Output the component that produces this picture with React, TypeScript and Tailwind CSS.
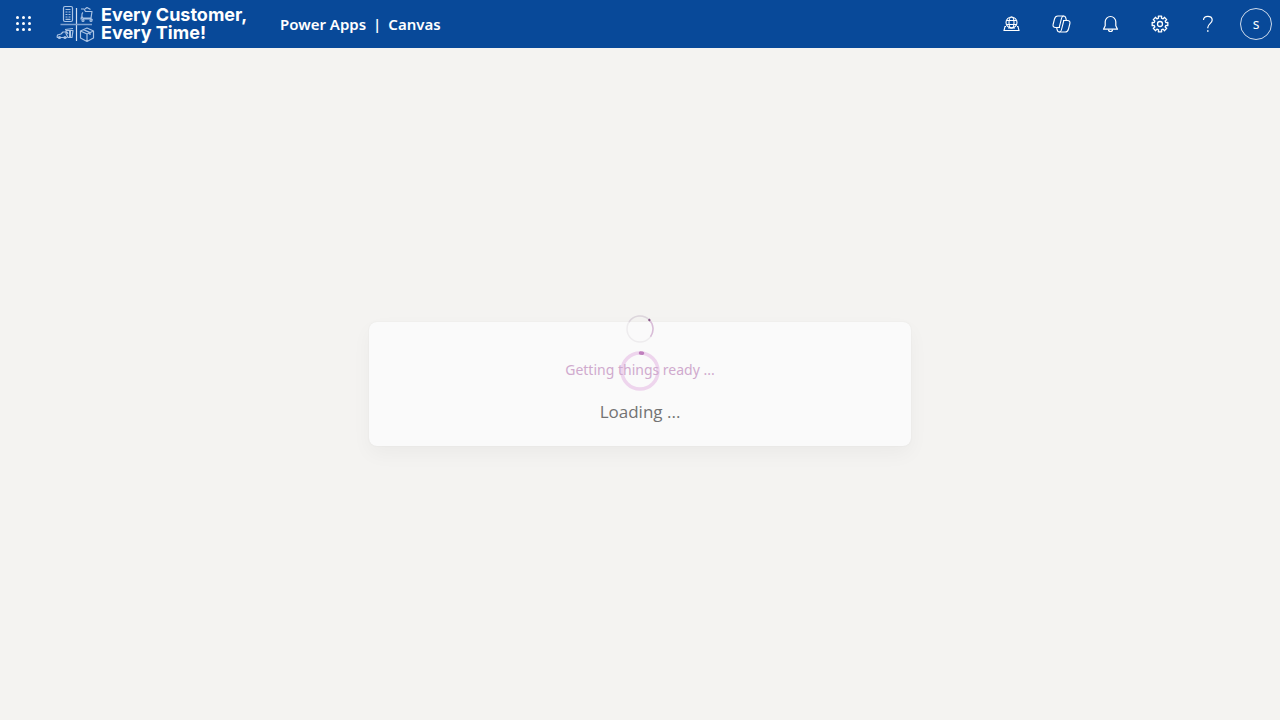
import React from 'react';

const teeth = Array.from({ length: 8 }, (_, i) => i * 45);
const gearPoints = teeth
  .flatMap((deg) =>
    [
      [deg - 12, 8],
      [deg + 12, 8],
      [deg + 14, 6],
      [deg + 31, 6],
    ].map(([a, r]) => {
      const t = (a * Math.PI) / 180;
      return `${(9 + r * Math.sin(t)).toFixed(2)},${(9 - r * Math.cos(t)).toFixed(2)}`;
    }),
  )
  .join(' ');

function WaffleIcon() {
  return (
    <svg width="16" height="16" viewBox="0 0 16 16" fill="white" aria-hidden="true">
      {[1.5, 7.5, 13.5].map((y) =>
        [1.5, 7.5, 13.5].map((x) => <circle key={`${x}-${y}`} cx={x} cy={y} r="1.5" />),
      )}
    </svg>
  );
}

function LogoMark() {
  return (
    <svg
      width="40"
      height="38"
      viewBox="0 0 40 38"
      fill="none"
      stroke="#a9c3e4"
      strokeWidth="1.200"
      strokeLinejoin="round"
      aria-hidden="true"
    >
      <path d="M20.500 3v33" stroke="#d3e0f0" />
      <path d="M4.500 19.500H36" stroke="#7fa2d0" strokeWidth="1.500" />
      <rect x="7.500" y="1.500" width="9" height="15" rx="1.500" />
      <path d="M9.500 4.500h5M9.500 7h2M12.500 7h2M9.500 9.500h2M12.500 9.500h2M9.500 12h2M12.500 12h2M9.500 14.300h5" />
      <path d="M25 4h3l1.500 2.500H36L35 13h-8M29 4l2-1.500 3.500 2M27 7.500c-1.500 1-1.500 4.500 0 5.500M25.500 11.500l-.5 2.500h10.500l1 1" />
      <circle cx="27" cy="15.500" r="1" />
      <circle cx="35" cy="15.500" r="1" />
      <path d="M1 32.500l.5-2.500 3.500-1 2-2h4l1 2M1 32.500h10M9 24.500l8-1M10 25.500h7l-1 7h-4l-2-4z" />
      <path d="M14 25.500v7" strokeWidth="2" />
      <circle cx="3.500" cy="32.500" r="1" />
      <circle cx="9" cy="32.500" r="1" />
      <path d="M24.500 26l6.500-3 6.500 3v7L31 36.500 24.500 33zM24.500 26l6.500 3 6.500-3M31 29v7.500M27.500 24.600l6.500 3v2.500" />
    </svg>
  );
}

function EnvironmentIcon() {
  return (
    <svg width="18" height="18" viewBox="0 0 18 18" fill="none" stroke="white" strokeWidth="1.100" aria-hidden="true">
      <circle cx="8.500" cy="7.500" r="5.500" />
      <ellipse cx="8.500" cy="7.500" rx="2.500" ry="5.500" />
      <path d="M3.500 5.500h10M3.500 9.500h10M3 11.500H2l-1 4h15l-1-4h-1M5 13h7" />
    </svg>
  );
}

function CopilotIcon() {
  return (
    <svg
      width="20"
      height="20"
      viewBox="0 0 20 20"
      fill="none"
      stroke="white"
      strokeWidth="1.100"
      strokeLinejoin="round"
      aria-hidden="true"
    >
      <path d="M9 13.500H4.500c-2 0-2.800-1.200-2.400-3l1.400-5.500c.5-2 1.500-3 3.300-3h6c1.200 0 1.700.8 2 2l.6 2.500" />
      <path d="M12 6.500h4.500c2 0 2.800 1.200 2.400 3L17.500 15c-.5 2-1.500 3-3.300 3h-6c-1.200 0-1.700-.8-2-2l-.6-2.500" />
      <path d="M12.800 2c-1.200 0-1.900.7-2.200 2L8.200 13.500M8.200 18c1.200 0 1.900-.7 2.200-2l2.400-9.500" />
    </svg>
  );
}

function BellIcon() {
  return (
    <svg width="18" height="18" viewBox="0 0 18 18" fill="none" stroke="white" strokeWidth="1.200" strokeLinejoin="round" aria-hidden="true">
      <path d="M9.500 1.500a5.300 5.300 0 0 0-5.300 5.300v4l-1.700 3.400h14l-1.700-3.400v-4a5.300 5.300 0 0 0-5.300-5.300z" />
      <path d="M7.500 14.500a2 2 0 0 0 4 0" />
    </svg>
  );
}

function GearIcon() {
  return (
    <svg width="18" height="18" viewBox="-1 0 18 18" fill="none" stroke="white" strokeWidth="1.300" strokeLinejoin="round" aria-hidden="true" overflow="visible">
      <polygon points={gearPoints} />
      <circle cx="9" cy="9" r="2.500" />
    </svg>
  );
}

function HelpIcon() {
  return (
    <svg width="18" height="18" viewBox="0 0 18 18" fill="none" stroke="white" strokeWidth="1.200" aria-hidden="true">
      <path d="M4.500 5C4.500 2.600 6.300 1.300 8.800 1.300S13.200 2.700 13.200 5c0 3.300-4.400 3.900-4.400 7.500v.8" />
      <path d="M8.800 15.300v1.500" strokeWidth="1.500" />
    </svg>
  );
}

const actions = [
  { label: 'Environment', icon: <EnvironmentIcon /> },
  { label: 'Copilot', icon: <CopilotIcon /> },
  { label: 'Notifications', icon: <BellIcon /> },
  { label: 'Settings', icon: <GearIcon /> },
  { label: 'Help', icon: <HelpIcon /> },
];

function Header() {
  return (
    <header className="flex h-12 items-center bg-[#084999] text-white">
      <button type="button" aria-label="App launcher" className="flex size-12 items-center justify-center">
        <WaffleIcon />
      </button>
      <a href="#home" className="flex items-center gap-[5px] pl-2">
        <LogoMark />
        <span className="flex w-[179px] flex-col whitespace-nowrap font-['Inter',sans-serif] text-lg leading-[18px] font-bold">
          <span>Every Customer,</span>
          <span>Every Time!</span>
        </span>
      </a>
      <nav className="flex items-center gap-[7px] text-[15px] font-semibold whitespace-nowrap">
        <a href="#apps">Power Apps</a>
        <span>|</span>
        <a href="#canvas">Canvas</a>
      </nav>
      <div className="ml-auto flex items-center">
        {actions.map((a) => (
          <button key={a.label} type="button" aria-label={a.label} className="flex h-12 w-[49px] items-center justify-center">
            {a.icon}
          </button>
        ))}
        <button
          type="button"
          aria-label="Account"
          className="mx-2 flex size-8 items-center justify-center rounded-full border border-white/80 text-sm"
        >
          s
        </button>
      </div>
    </header>
  );
}

function SmallSpinner() {
  return (
    <svg width="28" height="28" viewBox="0 0 28 28" fill="none" strokeWidth="1.500" aria-hidden="true">
      <circle cx="14" cy="14" r="13" stroke="#eeecee" />
      <path d="M3 7A13 13 0 0 1 23.200 4.800" stroke="#ddd6dc" />
      <path d="M23.200 4.800A13 13 0 0 1 24.500 21.700" stroke="#d9bcd8" />
      <path d="M22.600 4.200l1.500 1.600" stroke="#8a5a88" strokeWidth="2" />
    </svg>
  );
}

function LargeSpinner() {
  return (
    <svg width="40" height="40" viewBox="0 0 40 40" fill="none" strokeWidth="3.500" aria-hidden="true">
      <circle cx="20" cy="20" r="18" stroke="#eed5ed" />
      <path d="M20.500 2a18 18 0 0 1 2 .2" stroke="#bf7fbd" strokeLinecap="round" />
    </svg>
  );
}

export default function App() {
  return (
    <div className="flex min-h-screen flex-col bg-[#f4f3f1] font-['Noto_Sans',sans-serif]">
      <Header />
      <main className="flex flex-1 items-center justify-center px-4">
        <section
          role="status"
          className="relative flex w-full max-w-[542px] flex-col items-center gap-4 rounded-lg bg-[#fafafa] pt-9 pb-5 shadow-[0_8px_20px_rgba(0,0,0,0.04),0_0_2px_rgba(0,0,0,0.06)]"
        >
          <div className="absolute -top-[7px]">
            <SmallSpinner />
          </div>
          <div className="absolute top-[29px]">
            <LargeSpinner />
          </div>
          <p className="relative text-sm leading-6 text-[#d0aace]">Getting things ready ...</p>
          <p className="font-['Open_Sans',sans-serif] text-[17px] leading-7 text-[#737373]">Loading ...</p>
        </section>
      </main>
    </div>
  );
}
